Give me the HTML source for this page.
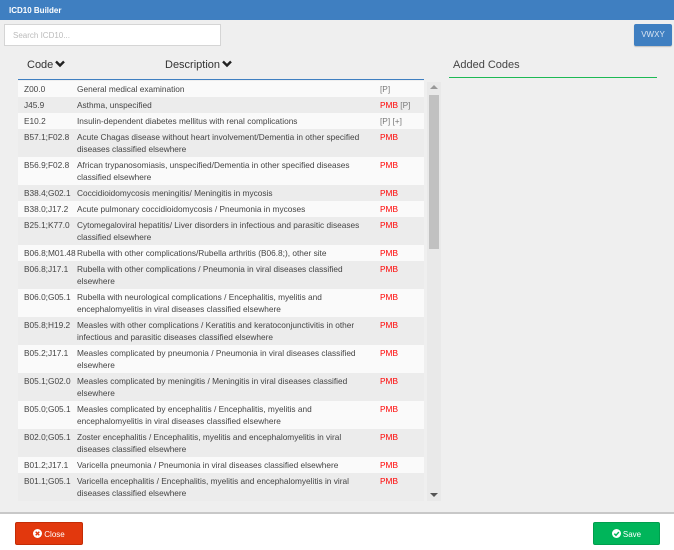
<!DOCTYPE html>
<html><head><style>
*{margin:0;padding:0;box-sizing:border-box}
body{width:674px;height:550px;overflow:hidden;background:#efefef;font-family:"Liberation Sans",sans-serif;position:relative}
.hdr{position:absolute;left:0;top:0;width:674px;height:20px;background:#3f7fc1;color:#fff;font-size:8px;font-weight:bold;padding:6px 0 0 9px}
.search{position:absolute;left:4px;top:24px;width:217px;height:22px;background:#fff;border:1px solid #d5d5d5;color:#bbb;font-size:8px;padding:6px 0 0 8px}
.vw{position:absolute;left:634px;top:24px;width:38px;height:22px;background:#3f7fc1;border-radius:2px;color:#dbe6f3;font-size:8px;text-align:center;padding-top:6px;box-shadow:0 1px 1px rgba(0,0,0,.2)}
.th{position:absolute;top:59px;font-size:11px;color:#333}
.th svg{vertical-align:0px;margin-left:2px}
.hline{position:absolute;left:18px;top:79px;width:406px;height:1px;background:#3f7fc1}
.added{position:absolute;left:453px;top:59px;font-size:11px;color:#444}
.gline{position:absolute;left:449px;top:77px;width:208px;height:1px;background:#1db954}
.list{position:absolute;left:18px;top:81px;width:406px;height:420px;overflow:hidden}
.r{position:relative;font-size:8.3px;color:#444;line-height:12px;padding:2px 0}
.r:nth-child(odd){background:#fafafa}
.r:nth-child(even){background:#ececec}
.c{position:absolute;left:6px;top:2px}
.d{margin-left:59px;width:292px}
.p{position:absolute;left:362px;top:2px;color:#777}
.m{color:#f00}
.sb{position:absolute;left:427px;top:82px;width:14px;height:419px;background:#e9e9e9}
.thumb{position:absolute;left:2px;top:13px;width:10px;height:154px;background:#c1c1c1}
.foot{position:absolute;left:0;top:512px;width:674px;height:38px;background:#fff;border-top:2px solid #c8c8c8}
.btn{position:absolute;top:8px;height:23px;color:#fff;font-size:8px;text-align:center;padding-top:6px;border-radius:2px}
.btn svg{vertical-align:-1px;margin-right:2px}
</style></head><body>
<div class="hdr">ICD10 Builder</div>
<div class="search">Search ICD10...</div>
<div class="vw">VWXY</div>
<div class="th" style="left:27px">Code<svg width="10" height="8" viewBox="0 0 10 8"><path d="M1 1.5 L5 5.5 L9 1.5" stroke="#222" stroke-width="2.4" fill="none"/></svg></div>
<div class="th" style="left:165px">Description<svg width="10" height="8" viewBox="0 0 10 8"><path d="M1 1.5 L5 5.5 L9 1.5" stroke="#222" stroke-width="2.4" fill="none"/></svg></div>
<div class="hline"></div>
<div class="added">Added Codes</div>
<div class="gline"></div>
<div class="list">
<div class="r"><span class="c">Z00.0</span><div class="d">General medical examination</div><span class="p">[P]</span></div>
<div class="r"><span class="c">J45.9</span><div class="d">Asthma, unspecified</div><span class="p"><span class="m">PMB</span> [P]</span></div>
<div class="r"><span class="c">E10.2</span><div class="d">Insulin-dependent diabetes mellitus with renal complications</div><span class="p">[P] [+]</span></div>
<div class="r"><span class="c">B57.1;F02.8</span><div class="d">Acute Chagas disease without heart involvement/Dementia in other specified diseases classified elsewhere</div><span class="p m">PMB</span></div>
<div class="r"><span class="c">B56.9;F02.8</span><div class="d">African trypanosomiasis, unspecified/Dementia in other specified diseases classified elsewhere</div><span class="p m">PMB</span></div>
<div class="r"><span class="c">B38.4;G02.1</span><div class="d">Coccidioidomycosis meningitis/ Meningitis in mycosis</div><span class="p m">PMB</span></div>
<div class="r"><span class="c">B38.0;J17.2</span><div class="d">Acute pulmonary coccidioidomycosis / Pneumonia in mycoses</div><span class="p m">PMB</span></div>
<div class="r"><span class="c">B25.1;K77.0</span><div class="d">Cytomegaloviral hepatitis/ Liver disorders in infectious and parasitic diseases classified elsewhere</div><span class="p m">PMB</span></div>
<div class="r"><span class="c">B06.8;M01.48</span><div class="d">Rubella with other complications/Rubella arthritis (B06.8;), other site</div><span class="p m">PMB</span></div>
<div class="r"><span class="c">B06.8;J17.1</span><div class="d">Rubella with other complications / Pneumonia in viral diseases classified elsewhere</div><span class="p m">PMB</span></div>
<div class="r"><span class="c">B06.0;G05.1</span><div class="d">Rubella with neurological complications / Encephalitis, myelitis and encephalomyelitis in viral diseases classified elsewhere</div><span class="p m">PMB</span></div>
<div class="r"><span class="c">B05.8;H19.2</span><div class="d">Measles with other complications / Keratitis and keratoconjunctivitis in other infectious and parasitic diseases classified elsewhere</div><span class="p m">PMB</span></div>
<div class="r"><span class="c">B05.2;J17.1</span><div class="d">Measles complicated by pneumonia / Pneumonia in viral diseases classified elsewhere</div><span class="p m">PMB</span></div>
<div class="r"><span class="c">B05.1;G02.0</span><div class="d">Measles complicated by meningitis / Meningitis in viral diseases classified elsewhere</div><span class="p m">PMB</span></div>
<div class="r"><span class="c">B05.0;G05.1</span><div class="d">Measles complicated by encephalitis / Encephalitis, myelitis and encephalomyelitis in viral diseases classified elsewhere</div><span class="p m">PMB</span></div>
<div class="r"><span class="c">B02.0;G05.1</span><div class="d">Zoster encephalitis / Encephalitis, myelitis and encephalomyelitis in viral diseases classified elsewhere</div><span class="p m">PMB</span></div>
<div class="r"><span class="c">B01.2;J17.1</span><div class="d">Varicella pneumonia / Pneumonia in viral diseases classified elsewhere</div><span class="p m">PMB</span></div>
<div class="r"><span class="c">B01.1;G05.1</span><div class="d">Varicella encephalitis / Encephalitis, myelitis and encephalomyelitis in viral diseases classified elsewhere</div><span class="p m">PMB</span></div>
<div class="r"><span class="c">B00.4</span><div class="d">Herpesviral encephalitis</div><span class="p m">PMB</span></div>
</div>
<div class="sb"><div class="thumb"></div>
<div style="position:absolute;left:3px;top:3px;border:4px solid transparent;border-bottom:4px solid #999;border-top:0"></div>
<div style="position:absolute;left:3px;top:411px;border:4px solid transparent;border-top:4px solid #555;border-bottom:0"></div></div>
<div class="foot">
<div class="btn" style="left:15px;width:68px;background:#e2380d;border:1px solid #c32c05"><svg width="9" height="9" viewBox="0 0 10 10"><circle cx="5" cy="5" r="5" fill="#fff"/><path d="M3 3L7 7M7 3L3 7" stroke="#e2380d" stroke-width="1.6"/></svg>Close</div>
<div class="btn" style="left:593px;width:67px;background:#00b55a;border:1px solid #009e4d"><svg width="9" height="9" viewBox="0 0 10 10"><circle cx="5" cy="5" r="5" fill="#fff"/><path d="M2.6 5.2L4.4 7L7.6 3.4" stroke="#00b55a" stroke-width="1.6" fill="none"/></svg>Save</div>
</div>
</body></html>
